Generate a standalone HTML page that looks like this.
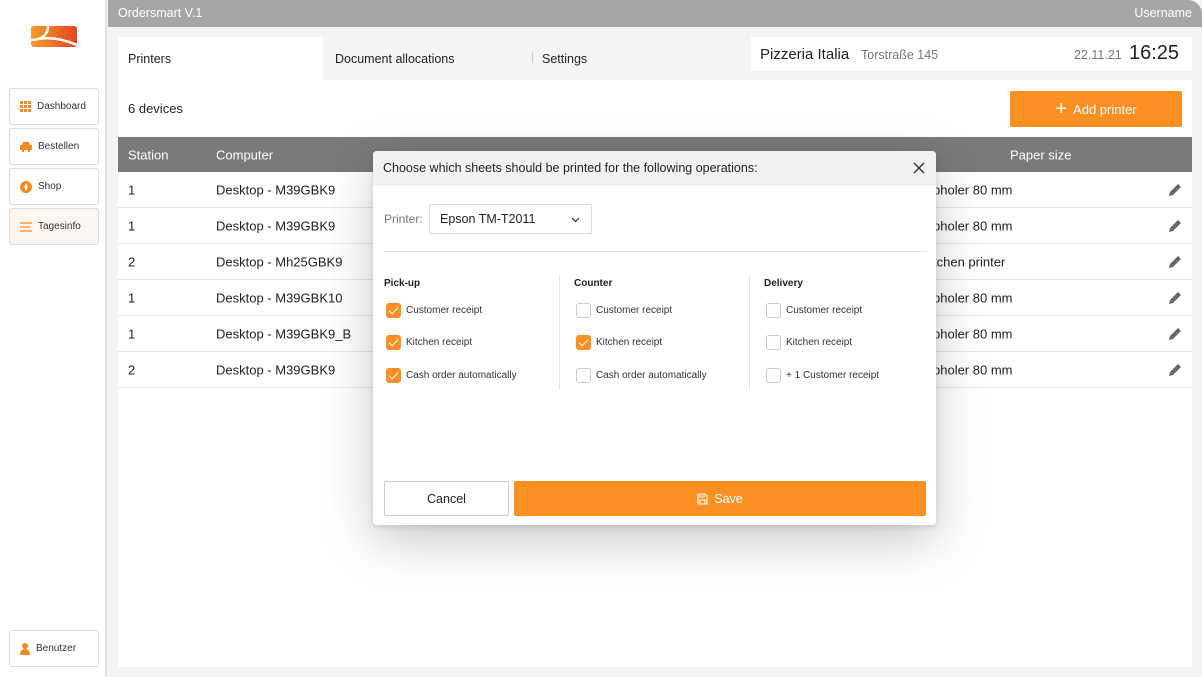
<!DOCTYPE html>
<html><head><meta charset="utf-8"><style>
*{box-sizing:border-box;margin:0;padding:0}
body{width:1202px;height:677px;overflow:hidden;background:#f4f4f4;font-family:"Liberation Sans",sans-serif;color:#222;position:relative;font-size:13px}
.abs{position:absolute}
.side{left:0;top:0;width:107px;height:677px;background:#fff;border-right:2px solid #e2e2e2}
.nav{position:absolute;left:9px;width:90px;height:37px;border:1px solid #ddd;border-radius:3px;background:#fff;font-size:10px;display:flex;align-items:center;padding-left:10px;gap:6px;color:#333}
.hdr{left:108px;top:0;width:1094px;height:27px;background:#a6a6a6;color:#fff;font-size:12.5px;border-top-right-radius:14px}
.tab{top:37px;height:43px;font-size:12.5px;display:flex;align-items:center}
.panel{left:118px;top:80px;width:1074px;height:587px;background:#fff}
.th{left:118px;top:137px;width:1074px;height:35px;background:#7a7a7a;color:#fff;font-size:13px}
.row{left:118px;width:1074px;height:36px;border-bottom:1px solid #e6e6e6;font-size:13px}
.row span,.th span{position:absolute;top:50%;transform:translateY(-50%)}
.modal{left:373px;top:151px;width:563px;height:374px;background:#fff;border-radius:4px;box-shadow:0 15px 50px rgba(0,0,0,.22),0 2px 6px rgba(0,0,0,.12)}
.cb{position:absolute;width:15px;height:15px;border:1px solid #ccc;border-radius:3px;background:#fff}
.cb.on{background:#fb8f22;border-color:#fb8f22}
.cb.on::after{content:"";position:absolute;left:4px;top:1px;width:4px;height:8px;border:solid #fff;border-width:0 1.5px 1.5px 0;transform:rotate(45deg)}
.lbl{position:absolute;font-size:10px;color:#333}
.ttl{position:absolute;font-size:10px;font-weight:bold;color:#222}
</style></head><body>
<div class="abs side">
<svg class="abs" style="left:31px;top:26px" width="46" height="21" viewBox="0 0 46 21"><defs><linearGradient id="g" x1="0" x2="1"><stop offset="0" stop-color="#f79a2a"/><stop offset="1" stop-color="#e5461f"/></linearGradient></defs><rect width="46" height="21" rx="3" fill="url(#g)"/><path d="M17 0 Q17 10 7 13 Q4 14 0 14 M7 13 Q26 10 46 19" stroke="#fff" stroke-width="2.5" fill="none"/></svg>
<div class="nav" style="top:88px"><svg width="11" height="11"><g fill="#f58a1f"><rect x="0" y="0" width="3" height="3"/><rect x="4" y="0" width="3" height="3"/><rect x="8" y="0" width="3" height="3"/><rect x="0" y="4" width="3" height="3"/><rect x="4" y="4" width="3" height="3"/><rect x="8" y="4" width="3" height="3"/><rect x="0" y="8" width="3" height="3"/><rect x="4" y="8" width="3" height="3"/><rect x="8" y="8" width="3" height="3"/></g></svg>Dashboard</div>
<div class="nav" style="top:128px"><svg width="12" height="11"><path d="M2 4 L3 1 H9 L10 4 H12 V9 H10 V11 H8 V9 H4 V11 H2 V9 H0 V4Z" fill="#f58a1f"/></svg>Bestellen</div>
<div class="nav" style="top:168px"><svg width="12" height="12"><circle cx="6" cy="6" r="6" fill="#f58a1f"/><path d="M6 2 Q9 6 6 10 Q3 7 6 2" fill="#fff"/></svg>Shop</div>
<div class="nav" style="top:208px;background:#fdf6ef"><svg width="12" height="10"><g stroke="#f58a1f" stroke-width="1.3"><path d="M0 1H12M0 5H10M0 9H12"/></g></svg>Tagesinfo</div>
<div class="nav" style="top:630px"><svg width="10" height="12"><circle cx="5" cy="3" r="3" fill="#f58a1f"/><path d="M0 12 Q0 6 5 6 Q10 6 10 12Z" fill="#f58a1f"/></svg>Benutzer</div>
</div>
<div class="abs hdr"><span class="abs" style="left:10px;top:6px">Ordersmart V.1</span><span class="abs" style="right:10px;top:6px">Username</span></div>
<div class="abs tab" style="left:118px;width:205px;background:#fff;padding-left:10px">Printers</div>
<div class="abs tab" style="left:335px">Document allocations</div>
<div class="abs" style="left:532px;top:52px;width:1px;height:11px;background:#ccc"></div>
<div class="abs tab" style="left:542px">Settings</div>
<div class="abs" style="left:751px;top:37px;width:441px;height:34px;background:#fff">
<span class="abs" style="left:9px;top:9px;font-size:15px">Pizzeria Italia</span>
<span class="abs" style="left:110px;top:11px;font-size:12.5px;color:#777">Torstraße 145</span>
<span class="abs" style="left:323px;top:11px;font-size:12.5px;color:#777">22.11.21</span>
<span class="abs" style="left:378px;top:5px;font-size:20px">16:25</span>
</div>
<div class="abs panel"></div>
<span class="abs" style="left:128px;top:101px">6 devices</span>
<div class="abs" style="left:1010px;top:91px;width:172px;height:36px;background:#fb8f22;border-radius:2px;color:#fff;font-size:13px;display:flex;align-items:center;justify-content:center"><span style="font-size:20px;margin-right:6px;font-weight:300">+</span>Add printer</div>
<div class="abs th"><span style="left:10px">Station</span><span style="left:98px">Computer</span><span style="left:892px">Paper size</span></div>
<div class="abs row" style="top:172px"><span style="left:10px">1</span><span style="left:98px">Desktop - M39GBK9</span><span style="left:815px">pholer 80 mm</span></div>
<div class="abs row" style="top:208px"><span style="left:10px">1</span><span style="left:98px">Desktop - M39GBK9</span><span style="left:815px">pholer 80 mm</span></div>
<div class="abs row" style="top:244px"><span style="left:10px">2</span><span style="left:98px">Desktop - Mh25GBK9</span><span style="left:815px">tchen printer</span></div>
<div class="abs row" style="top:280px"><span style="left:10px">1</span><span style="left:98px">Desktop - M39GBK10</span><span style="left:815px">pholer 80 mm</span></div>
<div class="abs row" style="top:316px"><span style="left:10px">1</span><span style="left:98px">Desktop - M39GBK9_B</span><span style="left:815px">pholer 80 mm</span></div>
<div class="abs row" style="top:352px"><span style="left:10px">2</span><span style="left:98px">Desktop - M39GBK9</span><span style="left:815px">pholer 80 mm</span></div>
<svg class="abs" style="left:1168px;top:183px" width="14" height="210"><g fill="#666"><path id="p" d="M1 13 L2 9 L10 1 L13 4 L5 12Z"/><use href="#p" y="36"/><use href="#p" y="72"/><use href="#p" y="108"/><use href="#p" y="144"/><use href="#p" y="180"/></g></svg>
<div class="abs modal">
<div class="abs" style="left:0;top:0;width:563px;height:35px;background:#f2f2f2;border-radius:4px 4px 0 0"><span class="abs" style="left:10px;top:10px;font-size:12.5px">Choose which sheets should be printed for the following operations:</span>
<svg class="abs" style="left:540px;top:11px" width="12" height="12"><path d="M1 1L11 11M11 1L1 11" stroke="#333" stroke-width="1.4"/></svg></div>
<span class="abs" style="left:11px;top:61px;font-size:12px;color:#777">Printer:</span>
<div class="abs" style="left:56px;top:53px;width:163px;height:30px;border:1px solid #ddd;border-radius:2px"><span class="abs" style="left:10px;top:7px;font-size:12.5px">Epson TM-T2011</span><svg class="abs" style="left:141px;top:12px" width="9" height="6"><path d="M1 1L4.5 4.5L8 1" stroke="#333" stroke-width="1.2" fill="none"/></svg></div>
<div class="abs" style="left:11px;top:100px;width:543px;height:1px;background:#e4e4e4"></div>
<div class="abs" style="left:186px;top:125px;width:1px;height:114px;background:#e4e4e4"></div>
<div class="abs" style="left:376px;top:125px;width:1px;height:114px;background:#e4e4e4"></div>
<span class="ttl" style="left:11px;top:127px">Pick-up</span>
<span class="ttl" style="left:201px;top:127px">Counter</span>
<span class="ttl" style="left:391px;top:127px">Delivery</span>
<div class="cb on" style="left:13px;top:152px"></div><span class="lbl" style="left:33px;top:154px">Customer receipt</span>
<div class="cb on" style="left:13px;top:184px"></div><span class="lbl" style="left:33px;top:186px">Kitchen receipt</span>
<div class="cb on" style="left:13px;top:217px"></div><span class="lbl" style="left:33px;top:219px">Cash order automatically</span>
<div class="cb" style="left:203px;top:152px"></div><span class="lbl" style="left:223px;top:154px">Customer receipt</span>
<div class="cb on" style="left:203px;top:184px"></div><span class="lbl" style="left:223px;top:186px">Kitchen receipt</span>
<div class="cb" style="left:203px;top:217px"></div><span class="lbl" style="left:223px;top:219px">Cash order automatically</span>
<div class="cb" style="left:393px;top:152px"></div><span class="lbl" style="left:413px;top:154px">Customer receipt</span>
<div class="cb" style="left:393px;top:184px"></div><span class="lbl" style="left:413px;top:186px">Kitchen receipt</span>
<div class="cb" style="left:393px;top:217px"></div><span class="lbl" style="left:413px;top:219px">+ 1 Customer receipt</span>
<div class="abs" style="left:11px;top:330px;width:125px;height:35px;border:1px solid #ccc;border-radius:2px;font-size:12.5px;display:flex;align-items:center;justify-content:center">Cancel</div>
<div class="abs" style="left:141px;top:330px;width:412px;height:35px;background:#fb8f22;border-radius:2px;color:#fff;font-size:12.5px;display:flex;align-items:center;justify-content:center;gap:6px"><svg width="11" height="12"><path d="M1 1H8L10 3V11H1Z M3 1V4H7V1 M3 11V7H8V11" stroke="#fff" stroke-width="1.1" fill="none"/></svg>Save</div>
</div>
</body></html>
